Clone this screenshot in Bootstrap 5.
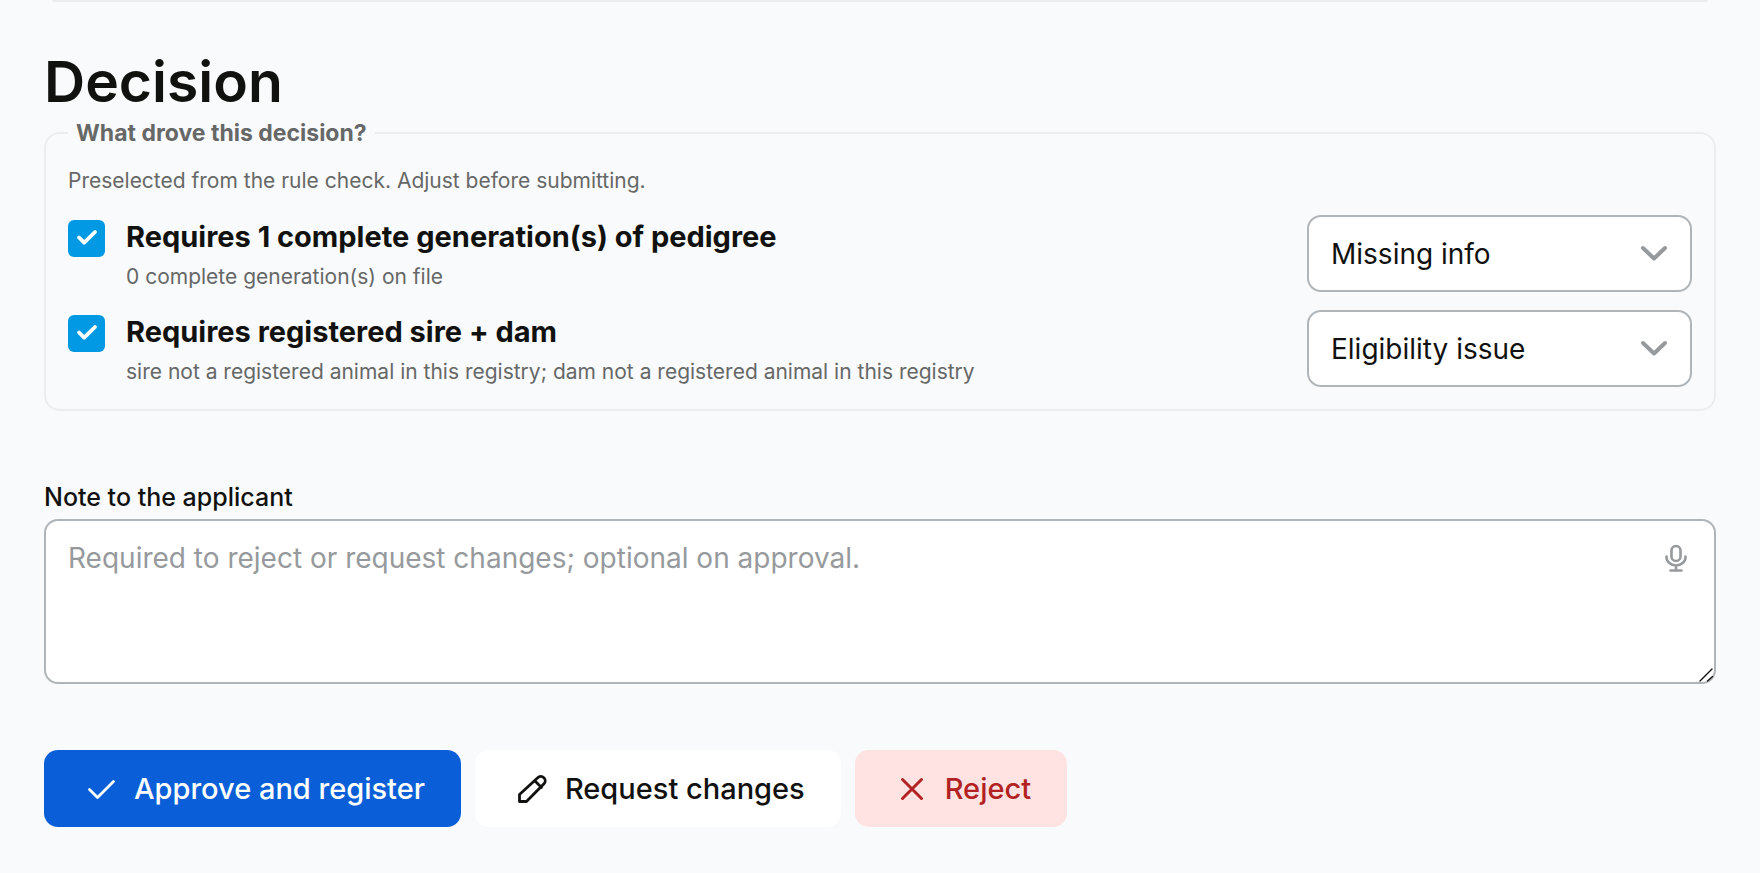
<!DOCTYPE html>
<html lang="en">
<head>
<meta charset="utf-8">
<meta name="viewport" content="width=device-width, initial-scale=1">
<title>Decision</title>
<link href="https://cdn.jsdelivr.net/npm/bootstrap@5.3.0/dist/css/bootstrap.min.css" rel="stylesheet">
<style>
  :root { --ink: #111210; --muted: #666867; --hairline: #ebedee; --field-line: #afb5b8; }
  body { background: #f9fafc; color: var(--ink); font-family: Inter, "Liberation Sans", sans-serif; font-size: 28px; }
  .review-page { padding: 0 44px 44px; }
  .previous-panel { height: 2px; margin: 0 8px 51px; background: var(--hairline); border-radius: 0 0 2px 2px; }
  .page-title { font-size: 57px; line-height: 58px; font-weight: 600; margin: 0 0 8px; }
  .reason-set { border: 2px solid var(--hairline); border-radius: 16px; padding: 0 22px 22px; margin-bottom: 70px; }
  .reason-set legend { float: none; width: auto; margin: 0 0 20px; padding: 0 8px; font-size: 23px; line-height: 28px; font-weight: 700; color: var(--muted); }
  .small-note { font-size: 21px; line-height: 28px; color: var(--muted); }
  .reason-row { gap: 21px; }
  .reason-row + .reason-row { margin-top: 18px; }
  .reason-row .form-check-input { flex: none; width: 37px; height: 37px; margin: 5px 0 0; border: 0; border-radius: 6px; }
  .reason-row .form-check-input:checked { background-color: #0199e3; background-size: 37px 37px;
    background-image: url("data:image/svg+xml,%3csvg xmlns='http://www.w3.org/2000/svg' viewBox='0 0 37 37'%3e%3cpath fill='none' stroke='%23fff' stroke-width='3.8' stroke-linecap='round' stroke-linejoin='round' d='M11 17.5l5.2 5.2L27 12'/%3e%3c/svg%3e"); }
  .reason-name { font-size: 29px; line-height: 44px; font-weight: 700; }
  .reason-row .form-select { flex: none; width: 385px; height: 77px; padding: 0 64px 0 22px; font-size: 28px; color: var(--ink);
    border: 2px solid var(--field-line); border-radius: 14px; background-color: #fff; background-position: right 21px center; background-size: 30px 30px;
    background-image: url("data:image/svg+xml,%3csvg xmlns='http://www.w3.org/2000/svg' viewBox='0 0 30 30'%3e%3cpath fill='none' stroke='%23969a9d' stroke-width='4' stroke-linecap='round' stroke-linejoin='round' d='M4 9l11 10.500L26 9'/%3e%3c/svg%3e"); }
  .note-label { font-size: 25px; line-height: 32px; font-weight: 500; margin-bottom: 6px; }
  .note-box { height: 165px; padding: 16px 80px 16px 22px; font-size: 28px; line-height: 42px; border: 2px solid var(--field-line); border-radius: 14px; background: #fff; }
  .note-box::placeholder { color: #969a9d; }
  .note-box::-webkit-resizer { background: none; }
  .mic-button { position: absolute; top: 23px; right: 24px; width: 32px; height: 32px; padding: 0; border: 0; background: none; color: #969a9d; }
  .resize-grip { position: absolute; right: 1px; bottom: 1px; pointer-events: none; }
  .action-bar { gap: 14px; margin-top: 66px; }
  .action-bar .btn { display: flex; align-items: center; gap: 14px; height: 77px; padding: 0 36px 0 38px; font-size: 29px; font-weight: 500; border: 0; border-radius: 14px; }
  .btn-approve, .btn-approve:hover { background: #0a5fd8; color: #fff; }
  .btn-changes, .btn-changes:hover { background: #fff; color: var(--ink); }
  .btn-reject, .btn-reject:hover { background: #ffe2e2; color: #b22222; }
  svg { display: block; flex: none; fill: none; stroke: currentColor; stroke-linecap: round; stroke-linejoin: round; }
</style>
</head>
<body>
<main class="review-page container-fluid">
  <div class="previous-panel"></div>
  <h1 class="page-title">Decision</h1>
  <form>
    <fieldset class="reason-set">
      <legend>What drove this decision?</legend>
      <p class="small-note mb-0 pb-3">Preselected from the rule check. Adjust before submitting.</p>
      <div class="reason-row d-flex align-items-start mt-1">
        <input class="form-check-input" type="checkbox" id="reason-pedigree" checked>
        <div class="flex-grow-1">
          <label class="reason-name d-block" for="reason-pedigree">Requires 1 complete generation(s) of pedigree</label>
          <div class="small-note mt-1">0 complete generation(s) on file</div>
        </div>
        <select class="form-select" aria-label="Pedigree reason type">
          <option selected>Missing info</option>
          <option>Eligibility issue</option>
        </select>
      </div>
      <div class="reason-row d-flex align-items-start">
        <input class="form-check-input" type="checkbox" id="reason-parents" checked>
        <div class="flex-grow-1">
          <label class="reason-name d-block" for="reason-parents">Requires registered sire + dam</label>
          <div class="small-note mt-1">sire not a registered animal in this registry; dam not a registered animal in this registry</div>
        </div>
        <select class="form-select" aria-label="Parent reason type">
          <option>Missing info</option>
          <option selected>Eligibility issue</option>
        </select>
      </div>
    </fieldset>

    <label class="note-label d-block" for="applicant-note">Note to the applicant</label>
    <div class="position-relative">
      <textarea class="form-control note-box" id="applicant-note" placeholder="Required to reject or request changes; optional on approval."></textarea>
      <button class="mic-button" type="button" aria-label="Dictate note">
        <svg width="32" height="32" viewBox="0 0 32 32" stroke-width="2.600"><rect x="11.500" y="4" width="9" height="15" rx="4.500"/><path d="M6.500 14.500v.800a9.500 8.200 0 0 0 19 0v-.800M16 23.500V28.500M10.500 28.500h11"/></svg>
      </button>
      <svg class="resize-grip" width="16" height="16" viewBox="0 0 16 16" stroke="#3c3f41" stroke-width="1.400"><path d="M1 14L13 2M8.500 14L13.500 9.500"/></svg>
    </div>

    <div class="action-bar d-flex flex-wrap">
      <button class="btn btn-approve" type="submit">
        <svg width="38" height="38" viewBox="0 0 38 38" stroke-width="2.800"><path d="M7.500 19.500l8 8L31.500 11.500"/></svg>
        Approve and register
      </button>
      <button class="btn btn-changes" type="button">
        <svg width="38" height="38" viewBox="0 0 38 38" stroke-width="2.800"><path d="M6.500 31.500v-7L24.700 7.800a4.300 4.300 0 0 1 6.300 6L13.500 31.500zM22 11l6.500 6.500"/></svg>
        Request changes
      </button>
      <button class="btn btn-reject" type="button">
        <svg width="38" height="38" viewBox="0 0 38 38" stroke-width="3"><path d="M9.500 9.500l19 19M28.500 9.500l-19 19"/></svg>
        Reject
      </button>
    </div>
  </form>
</main>
<script src="https://cdn.jsdelivr.net/npm/bootstrap@5.3.0/dist/js/bootstrap.bundle.min.js"></script>
</body>
</html>
